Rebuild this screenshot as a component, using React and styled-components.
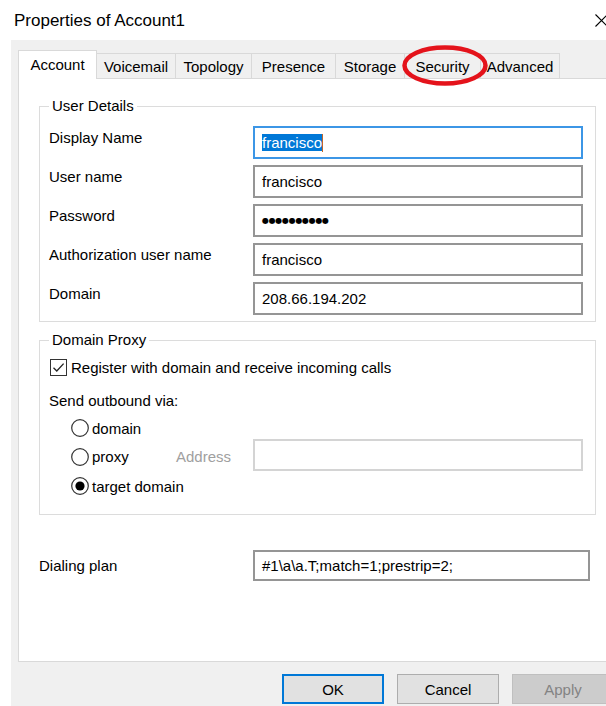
import React from 'react';
import styled, { createGlobalStyle } from 'styled-components';

const GlobalStyle = createGlobalStyle`
  html, body {
    margin: 0;
    padding: 0;
    background: #ffffff;
    overflow: hidden;
  }
  body {
    font-family: "Liberation Sans", Arial, sans-serif;
    color: #000;
  }
`;

const Window = styled.div`
  width: 622px;
  height: 706px;
  display: flex;
  flex-direction: column;
  background: #ffffff;
  font-size: 15px;
`;

const TitleBar = styled.div`
  height: 40px;
  flex: none;
  display: flex;
  align-items: center;
  justify-content: space-between;
  padding: 0 14px;
`;

const Title = styled.span`
  font-size: 17px;
  margin-top: 2px;
`;

const Body = styled.div`
  flex: 1;
  margin-left: 11px;
  background: #f0f0f0;
  padding: 10px 8px 0 7px;
  display: flex;
  flex-direction: column;
`;

const TabStrip = styled.div`
  position: relative;
  z-index: 1;
  height: 29px;
  display: flex;
  align-items: flex-end;
`;

const Tab = styled.div`
  box-sizing: border-box;
  width: ${(p) => p.$width}px;
  display: flex;
  align-items: center;
  justify-content: center;
  height: ${(p) => (p.$active ? 29 : 25)}px;
  margin-bottom: ${(p) => (p.$active ? 0 : 1)}px;
  background: ${(p) => (p.$active ? '#ffffff' : '#f0f0f0')};
  border-top: 1px solid #d9d9d9;
  border-right: 1px solid #d9d9d9;
  border-left: ${(p) => (p.$active ? '1px solid #d9d9d9' : 'none')};
  padding-bottom: ${(p) => (p.$active ? 2 : 0)}px;
`;

// red ring drawn around the Security tab
const Marker = styled.svg`
  position: absolute;
  left: 384px;
  top: -5px;
  pointer-events: none;
`;

const Panel = styled.div`
  box-sizing: border-box;
  height: 584px;
  margin-top: -1px;
  background: #ffffff;
  border: 1px solid #d9d9d9;
  padding-left: 20px;
`;

const GroupBox = styled.fieldset`
  box-sizing: border-box;
  width: 557px;
  margin: ${(p) => p.$top}px 0 0 0;
  border: 1px solid #dcdcdc;
  padding: ${(p) => p.$padTop}px 9px ${(p) => p.$padBottom}px 9px;
`;

const Legend = styled.legend`
  padding: 0 3px;
  line-height: 18px;
`;

const Fields = styled.div`
  display: flex;
  flex-direction: column;
  gap: 6px;
`;

const FieldRow = styled.div`
  display: flex;
  align-items: flex-start;
`;

const FieldLabel = styled.div`
  width: ${(p) => p.$width || 204}px;
  padding-top: ${(p) => (p.$center ? 0 : 3)}px;
  line-height: 18px;
  align-self: ${(p) => (p.$center ? 'center' : 'flex-start')};
`;

const TextBox = styled.div`
  box-sizing: border-box;
  width: ${(p) => p.$width || 330}px;
  height: ${(p) => p.$height || 33}px;
  display: flex;
  align-items: center;
  padding: 0 7px;
  background: #ffffff;
  border: 2px solid
    ${(p) => (p.$focused ? '#3c96e6' : p.$disabled ? '#d4d4d4' : '#959595')};
  white-space: nowrap;
`;

const Selection = styled.span`
  background: #0078d7;
  color: #ffffff;
  line-height: 17px;
`;

const Caret = styled.span`
  width: 1px;
  height: 18px;
  background: #c2662a;
`;

const Dots = styled.span`
  font-family: "DejaVu Sans", sans-serif;
  font-size: 8px;
  letter-spacing: -0.3px;
`;

const CheckRow = styled.div`
  height: 19px;
  display: flex;
  align-items: center;
  gap: 4px;
  margin-left: 1px;
`;

const PlainText = styled.div`
  line-height: 18px;
  margin-top: ${(p) => p.$top || 0}px;
`;

const RadioList = styled.div`
  margin-top: 7px;
  padding-left: 22px;
  display: flex;
  flex-direction: column;
`;

const RadioRow = styled.div`
  height: ${(p) => p.$height}px;
  display: flex;
  align-items: center;
`;

const RadioItem = styled.label`
  display: flex;
  align-items: center;
  gap: 3px;
  width: ${(p) => (p.$width ? `${p.$width}px` : 'auto')};
  margin-top: ${(p) => p.$shift || 0}px;
`;

const DimLabel = styled.span`
  width: 77px;
  color: #a0a0a0;
  margin-top: 2px;
`;

const DialRow = styled.div`
  margin-top: 35px;
  display: flex;
  align-items: center;
`;

const ButtonRow = styled.div`
  padding-top: 12px;
  display: flex;
  justify-content: flex-end;
  gap: 13px;
`;

const Button = styled.button`
  box-sizing: border-box;
  width: 102px;
  height: 30px;
  font-family: inherit;
  font-size: 15px;
  padding: 0;
  color: ${(p) => (p.disabled ? '#838383' : '#000')};
  background: ${(p) => (p.disabled ? '#cccccc' : '#e1e1e1')};
  border: ${(p) =>
    p.$primary ? '2px solid #0078d7' : p.disabled ? '1px solid #bfbfbf' : '1px solid #adadad'};
`;

const tabs = [
  { label: 'Account', width: 79, active: true },
  { label: 'Voicemail', width: 79 },
  { label: 'Topology', width: 76 },
  { label: 'Presence', width: 84 },
  { label: 'Storage', width: 69 },
  { label: 'Security', width: 76 },
  { label: 'Advanced', width: 79 },
];

const CloseIcon = () => (
  <svg width="13" height="13" viewBox="0 0 13 13">
    <path d="M0.5 0.5 L12.5 12.5 M12.5 0.5 L0.5 12.5" stroke="#000" strokeWidth="1.1" />
  </svg>
);

const CheckBox = () => (
  <svg width="17" height="17" viewBox="0 0 17 17">
    <rect x="0.5" y="0.5" width="16" height="16" fill="#fff" stroke="#333" />
    <path d="M3.5 8.8 L6.8 12 L13.6 4.6" fill="none" stroke="#222" strokeWidth="1.3" />
  </svg>
);

const Radio = ({ checked }) => (
  <svg width="18" height="18" viewBox="0 0 18 18">
    <circle cx="9" cy="9" r="8.3" fill="#fff" stroke="#333" strokeWidth="1.2" />
    {checked && <circle cx="9" cy="9" r="4.6" fill="#000" />}
  </svg>
);

const App = () => (
  <>
    <GlobalStyle />
    <Window>
      <TitleBar>
        <Title>Properties of Account1</Title>
        <CloseIcon />
      </TitleBar>
      <Body>
        <TabStrip>
          {tabs.map((t) => (
            <Tab key={t.label} $width={t.width} $active={t.active}>
              {t.label}
            </Tab>
          ))}
          <Marker width="86" height="41" viewBox="0 0 86 41">
            <ellipse cx="43" cy="20.5" rx="40.5" ry="18" fill="none" stroke="#e4131b" strokeWidth="4.5" />
          </Marker>
        </TabStrip>
        <Panel>
          <GroupBox $top={18} $padTop={11} $padBottom={6}>
            <Legend>User Details</Legend>
            <Fields>
              <FieldRow>
                <FieldLabel>Display Name</FieldLabel>
                <TextBox $focused>
                  <Selection>francisco</Selection>
                  <Caret />
                </TextBox>
              </FieldRow>
              <FieldRow>
                <FieldLabel>User name</FieldLabel>
                <TextBox>francisco</TextBox>
              </FieldRow>
              <FieldRow>
                <FieldLabel>Password</FieldLabel>
                <TextBox>
                  <Dots>●●●●●●●●●●</Dots>
                </TextBox>
              </FieldRow>
              <FieldRow>
                <FieldLabel>Authorization user name</FieldLabel>
                <TextBox>francisco</TextBox>
              </FieldRow>
              <FieldRow>
                <FieldLabel>Domain</FieldLabel>
                <TextBox>208.66.194.202</TextBox>
              </FieldRow>
            </Fields>
          </GroupBox>

          <GroupBox $top={9} $padTop={9} $padBottom={13}>
            <Legend>Domain Proxy</Legend>
            <CheckRow>
              <CheckBox />
              <span>Register with domain and receive incoming calls</span>
            </CheckRow>
            <PlainText $top={15}>Send outbound via:</PlainText>
            <RadioList>
              <RadioRow $height={22}>
                <RadioItem>
                  <Radio />
                  domain
                </RadioItem>
              </RadioRow>
              <RadioRow $height={32}>
                <RadioItem $width={105} $shift={3}>
                  <Radio />
                  proxy
                </RadioItem>
                <DimLabel>Address</DimLabel>
                <TextBox $disabled $height={32} />
              </RadioRow>
              <RadioRow $height={30}>
                <RadioItem>
                  <Radio checked />
                  target domain
                </RadioItem>
              </RadioRow>
            </RadioList>
          </GroupBox>

          <DialRow>
            <FieldLabel $width={214} $center>
              Dialing plan
            </FieldLabel>
            <TextBox $width={337} $height={31}>
              #1\a\a.T;match=1;prestrip=2;
            </TextBox>
          </DialRow>
        </Panel>
        <ButtonRow>
          <Button $primary>OK</Button>
          <Button>Cancel</Button>
          <Button disabled>Apply</Button>
        </ButtonRow>
      </Body>
    </Window>
  </>
);

export default App;
